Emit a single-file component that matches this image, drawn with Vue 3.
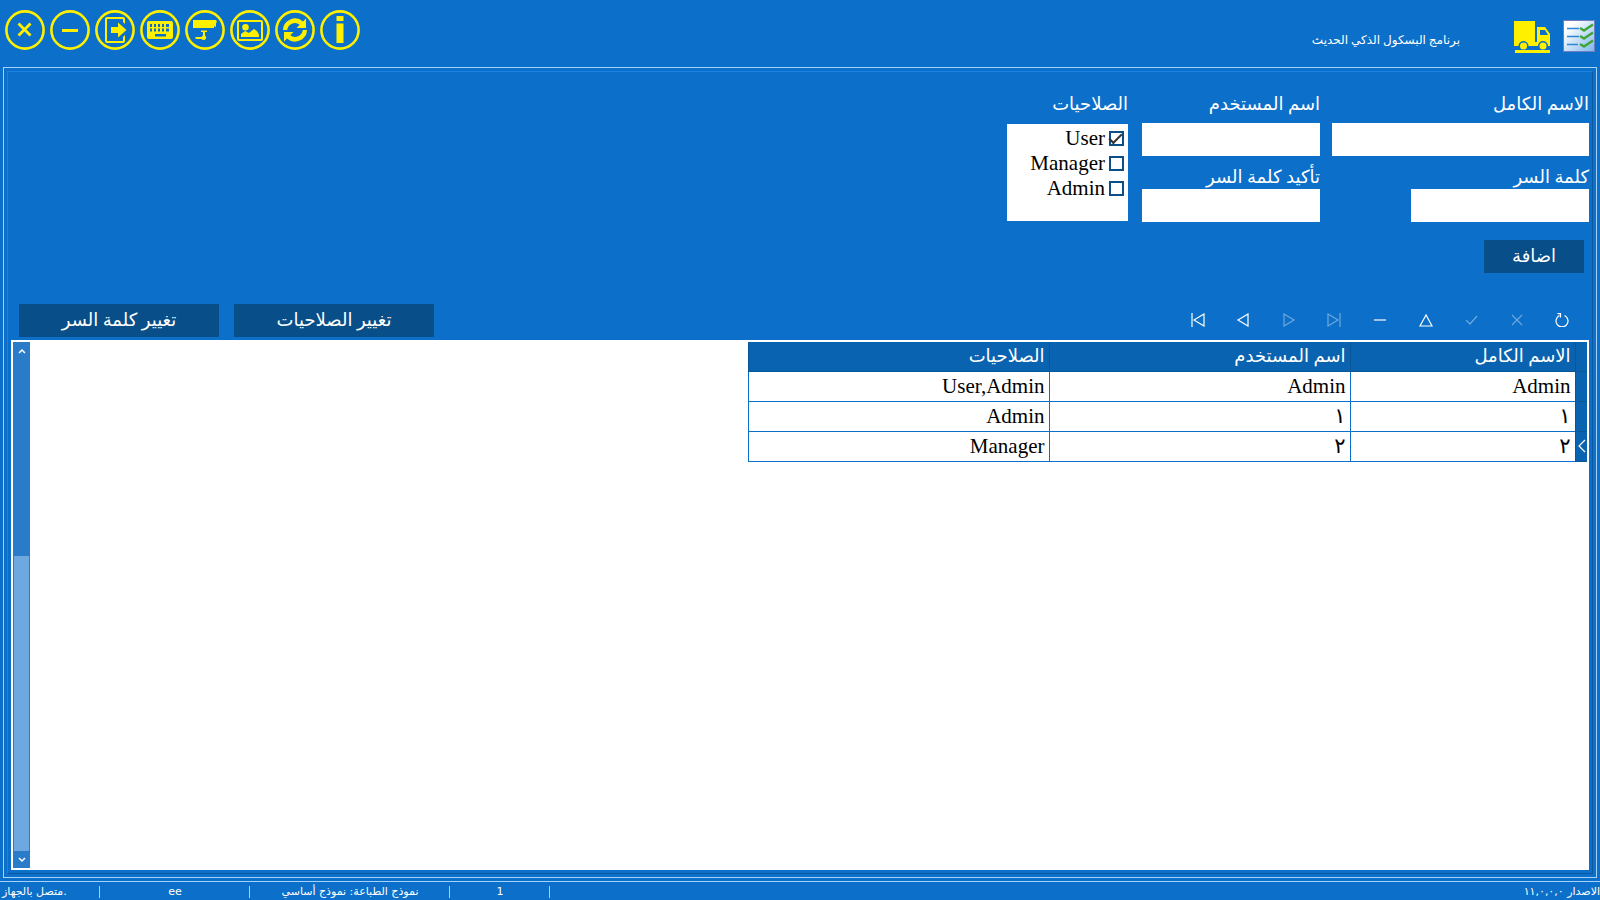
<template>
  <div class="app" dir="rtl">
    <header class="header">
      <svg class="header__list" viewBox="0 0 32 32" aria-hidden="true">
        <defs>
          <linearGradient id="sheet" x1="0" y1="0" x2="1" y2="1">
            <stop offset="0.2" stop-color="#ffffff" />
            <stop offset="1" stop-color="#7db4ee" />
          </linearGradient>
        </defs>
        <rect x="0.5" y="0.5" width="31" height="31" fill="url(#sheet)" stroke="#6f7fbd" />
        <path d="M4 8.5h12M4 16.500h12M4 24.500h11" stroke="#2f86d6" stroke-width="1.300" />
        <path d="M17 8l4 2.500l9-6M17 16l4 2.500l9-6M17 24l4 2.500l9-6" fill="none" stroke="#3fa535" stroke-width="2.400" />
      </svg>
      <svg class="header__truck" viewBox="0 0 36 32" fill="#fff000" fill-rule="evenodd" aria-hidden="true">
        <path d="M0 0h21v21h2V6h8l5 7v12h-2a5 5 0 0 0-10 0h-9.500a5 5 0 0 0-10 0H0zM26 9v5h8l-3-5z" />
        <circle cx="9.500" cy="25" r="3.500" />
        <circle cx="29" cy="25" r="3.500" />
        <path d="M1 29h35v3H1z" />
      </svg>
      <h1 class="header__title">برنامج البسكول الذكي الحديث</h1>
      <nav class="header__actions" dir="ltr">
        <button v-for="action in actions" :key="action.name" class="round" type="button" :aria-label="action.name">
          <svg viewBox="0 0 40 40" fill="#fff000" fill-rule="evenodd">
            <circle cx="20" cy="20" r="18.600" fill="none" stroke="#fff000" stroke-width="2.600" />
            <path :d="action.path" />
          </svg>
        </button>
      </nav>
    </header>

    <main class="panel">
      <div class="panel__inner">
        <form class="form" @submit.prevent>
          <div class="form__columns">
            <div class="column column--wide">
              <div class="field">
                <label for="full-name">الاسم الكامل</label>
                <input id="full-name" v-model="form.fullName" type="text" />
              </div>
              <div class="field field--short">
                <label for="password">كلمة السر</label>
                <input id="password" v-model="form.password" type="password" autocomplete="off" />
              </div>
            </div>
            <div class="column">
              <div class="field">
                <label for="user-name">اسم المستخدم</label>
                <input id="user-name" v-model="form.userName" type="text" />
              </div>
              <div class="field">
                <label for="confirm">تأكيد كلمة السر</label>
                <input id="confirm" v-model="form.confirm" type="password" autocomplete="off" />
              </div>
            </div>
            <fieldset class="roles">
              <legend>الصلاحيات</legend>
              <div class="roles__list">
                <label v-for="role in roles" :key="role" class="roles__item">
                  <input v-model="form.roles" type="checkbox" :value="role" />{{ role }}
                </label>
              </div>
            </fieldset>
          </div>
          <button class="button button--small" type="submit">اضافة</button>
        </form>

        <div class="toolbar">
          <div class="navigator" dir="ltr">
            <button
              v-for="item in navigator"
              :key="item.name"
              class="navigator__button"
              type="button"
              :aria-label="item.name"
              :disabled="item.disabled"
            >
              <svg viewBox="0 0 14 14" fill="none" stroke="#ffffff" stroke-width="1.200"><path :d="item.path" /></svg>
            </button>
          </div>
          <div class="toolbar__buttons">
            <button class="button" type="button">تغيير الصلاحيات</button>
            <button class="button" type="button">تغيير كلمة السر</button>
          </div>
        </div>

        <section class="grid">
          <div class="grid__body">
            <table class="table">
              <thead>
                <tr>
                  <th class="table__marker"></th>
                  <th class="table__name">الاسم الكامل</th>
                  <th class="table__wide">اسم المستخدم</th>
                  <th class="table__wide">الصلاحيات</th>
                </tr>
              </thead>
              <tbody>
                <tr v-for="(user, index) in users" :key="index" @click="selected = index">
                  <td class="table__marker">
                    <svg v-if="index === selected" viewBox="0 0 11 14" fill="none" stroke="#ffffff" stroke-width="1.200">
                      <path d="M9 1L3 7l6 6" />
                    </svg>
                  </td>
                  <td>{{ user.fullName }}</td>
                  <td>{{ user.userName }}</td>
                  <td>{{ user.roles }}</td>
                </tr>
              </tbody>
            </table>
          </div>
          <div class="scroll">
            <button class="scroll__arrow" type="button" aria-label="Up">
              <svg viewBox="0 0 8 6"><path d="M1 5l3-3l3 3" /></svg>
            </button>
            <div class="scroll__track"><div class="scroll__thumb"></div></div>
            <button class="scroll__arrow" type="button" aria-label="Down">
              <svg viewBox="0 0 8 6"><path d="M1 1l3 3l3-3" /></svg>
            </button>
          </div>
        </section>
      </div>
    </main>

    <footer class="status" dir="ltr">
      <span class="status__cell status__cell--start">متصل بالجهاز.</span>
      <span class="status__cell status__cell--medium">ee</span>
      <span class="status__cell status__cell--large" dir="rtl">نموذج الطباعة: نموذج أساسي</span>
      <span class="status__cell">1</span>
      <span class="status__version" dir="rtl">الاصدار ١١,٠,٠,٠</span>
    </footer>
  </div>
</template>

<script setup>
import { reactive, ref } from 'vue'

const actions = [
  { name: 'Close', path: 'M14.500 12.500l5 5l5-5l2 2l-5 5l5 5l-2 2l-5-5l-5 5l-2-2l5-5l-5-5z' },
  { name: 'Minimize', path: 'M12 19h16v3H12z' },
  { name: 'Logout', path: 'M12 7h16q2 0 2 2v5l-2-2V9H12v22h16v-4l2-2v6q0 2-2 2H12q-2 0-2-2V9q0-2 2-2zM16 17h7v-4.500l8.500 7.500L23 27.500V23h-7z' },
  {
    name: 'Keyboard',
    path: 'M9 11h22q2 0 2 2v14q0 2-2 2H9q-2 0-2-2V13q0-2 2-2zM10 14v3h2v-3zM14 14v3h2v-3zM18 14v3h2v-3zM22 14v3h2v-3zM26 14v3h3v-3zM10 18.500v3h2v-3zM14 18.500v3h2v-3zM18 18.500v3h2v-3zM22 18.500v3h2v-3zM26 18.500v3h3v-3zM15 24v2.500h11V24z'
  },
  { name: 'Camera', path: 'M8 10h23l1 2l-1 1v4l-2-1v2H8zM16 20.500h6v1.500h-2v3.500q1.200 1 1.200 2a2.600 2.600 0 0 1-4.700 1.500h-6v-2h6q.5-1 1.500-1.500V22h-2z' },
  {
    name: 'Image',
    path: 'M9 10h22q2 0 2 2v17q0 2-2 2H9q-2 0-2-2V12q0-2 2-2zM9 12v17h22V12zM15.500 14a3.300 3.300 0 1 1 0 6.600a3.300 3.300 0 1 1 0-6.600zM11 27v-3l4-3l4 2l5-4q4 2 5 6v2z'
  },
  {
    name: 'Refresh',
    path: 'M8 20A12 12 0 0 1 28 11.500L31 8.500V18H21.500l3.200-3.200A7.800 7.800 0 0 0 12.200 20zM32 20A12 12 0 0 1 12 28.500L9 31.500V22h9.500l-3.200 3.200A7.800 7.800 0 0 0 27.800 20z'
  },
  { name: 'Info', path: 'M16.500 6h7v5h-7zM16.500 13.500h7V33h-7z' }
]

const navigator = [
  { name: 'First', path: 'M1 0v14M13 1v12L3 7z' },
  { name: 'Previous', path: 'M12 1v12L2 7z' },
  { name: 'Next', path: 'M2 1v12l10-6z', disabled: true },
  { name: 'Last', path: 'M1 1v12l10-6zM13 0v14', disabled: true },
  { name: 'Delete', path: 'M1 7h12' },
  { name: 'Edit', path: 'M7 2L1 13h12z' },
  { name: 'Post', path: 'M2 7l4 4l7-8', disabled: true },
  { name: 'Cancel', path: 'M2 2l10 10M12 2L2 12', disabled: true },
  { name: 'Refresh', path: 'M4.500 2.500a6 6 0 1 0 5 0M2.500 0.600h3v4' }
]

const roles = ['User', 'Manager', 'Admin']

const users = [
  { fullName: 'Admin', userName: 'Admin', roles: 'User,Admin' },
  { fullName: '١', userName: '١', roles: 'Admin' },
  { fullName: '٢', userName: '٢', roles: 'Manager' }
]

const selected = ref(2)

const form = reactive({
  fullName: '',
  userName: '',
  password: '',
  confirm: '',
  roles: ['User']
})
</script>

<style>
body {
  background-color: #0c6fc9;
}
</style>

<style scoped>
.app {
  display: flex;
  flex-direction: column;
  min-height: 100vh;
  background-color: #0c6fc9;
  color: #ffffff;
  font-family: "Liberation Serif", "DejaVu Sans", serif;
  font-size: 18px;
}

.app * {
  box-sizing: border-box;
}

button {
  padding: 0;
  border: none;
  background: none;
  color: inherit;
  font: inherit;
  cursor: pointer;
}

svg {
  display: block;
}

/* Header */
.header {
  display: flex;
  align-items: flex-start;
  height: 67px;
  padding: 10px 5px 0;
}

.header__list {
  width: 32px;
  height: 32px;
  margin-top: 10px;
}

.header__truck {
  width: 36px;
  height: 32px;
  margin: 11px 13px 0 54px;
}

.header__title {
  margin: 20px 0 0;
  font-size: 12px;
  font-weight: 400;
  line-height: 20px;
}

.header__actions {
  display: flex;
  gap: 5px;
  margin-right: auto;
}

.round {
  width: 40px;
  height: 40px;
}

/* Panel */
.panel {
  display: flex;
  flex: 1;
  margin: 0 3px 3px;
  padding: 3px;
  border: 1px solid #a3d2fb;
}

.panel__inner {
  display: flex;
  flex: 1;
  flex-direction: column;
  padding: 20px 3px 3px;
  border: 1px solid #1a80e2;
  border-right-color: #0a58a0;
  border-bottom-color: #0a58a0;
}

/* Form */
.form__columns {
  display: flex;
  gap: 12px;
}

.column {
  display: flex;
  flex-direction: column;
  gap: 9px;
  width: 178px;
}

.column--wide {
  width: 257px;
}

.field {
  display: flex;
  flex-direction: column;
}

.field:first-child {
  gap: 7px;
}

.field--short {
  width: 178px;
}

.field label,
.roles legend {
  line-height: 24px;
  white-space: nowrap;
}

.field label {
  height: 24px;
}

.field input {
  width: 100%;
  height: 33px;
  padding: 0 6px;
  border: none;
  outline: none;
  background-color: #ffffff;
  font: inherit;
}

.roles {
  width: 121px;
  min-width: 0;
  margin: 0 2px 0 0;
  padding: 0;
  border: none;
}

.roles legend {
  padding: 0;
}

.roles__list {
  height: 97px;
  margin-top: 8px;
  padding: 2px 4px;
  background-color: #ffffff;
  color: #000000;
}

.roles__item {
  display: flex;
  align-items: center;
  gap: 4px;
  height: 25px;
  font-size: 21px;
}

.roles__item input {
  display: grid;
  place-items: center;
  width: 15px;
  height: 15px;
  margin: 0;
  border: 2px solid #0a4f8a;
  appearance: none;
}

.roles__item input:checked::after {
  content: "";
  width: 11px;
  height: 5px;
  border: solid #333333;
  border-width: 0 0 2px 2px;
  transform: rotate(-45deg) translate(1px, -1px);
}

.button {
  width: 200px;
  height: 33px;
  padding-bottom: 2px;
  background-color: #084e89;
}

.button--small {
  display: block;
  width: 100px;
  margin: 18px 5px 0 0;
}

/* Toolbar */
.toolbar {
  display: flex;
  align-items: flex-start;
  justify-content: space-between;
  margin: 31px 4px 3px 8px;
}

.navigator {
  display: flex;
  width: 410px;
}

.navigator__button {
  display: flex;
  flex: 1;
  align-items: center;
  justify-content: center;
  height: 31px;
}

.navigator__button svg {
  width: 14px;
  height: 14px;
}

.navigator__button:disabled {
  opacity: 0.4;
  cursor: default;
}

.toolbar__buttons {
  display: flex;
  gap: 15px;
}

/* Grid */
.grid {
  display: flex;
  flex: 1;
  border: 2px solid #ffffff;
  background-color: #ffffff;
}

.grid__body {
  flex: 1;
}

.table {
  table-layout: fixed;
  width: 839px;
  border-collapse: collapse;
  color: #000000;
}

.table th,
.table td {
  height: 30px;
  padding: 0 4px;
  border-bottom: 1px solid #0c6fc9;
  border-left: 1px solid #0c6fc9;
  line-height: 26px;
  text-align: right;
}

.table th {
  height: 29px;
  border-color: #0a5596;
  background-color: #0a63b0;
  color: #ffffff;
  font-weight: 400;
}

.table td {
  font-size: 21px;
}

.table .table__marker {
  width: 12px;
  padding: 0;
  border-color: #0a5596;
  background-color: #0a63b0;
}

.table__marker svg {
  width: 11px;
  height: 14px;
}

.table__name {
  width: 225px;
}

.table__wide {
  width: 301px;
}

.scroll {
  display: flex;
  flex-direction: column;
  width: 17px;
  background-color: #2a7cc8;
}

.scroll__arrow {
  display: flex;
  align-items: center;
  justify-content: center;
  height: 17px;
}

.scroll__arrow svg {
  width: 8px;
  height: 6px;
  fill: none;
  stroke: #ffffff;
  stroke-width: 1.5px;
}

.scroll__track {
  display: flex;
  flex: 1;
  flex-direction: column;
  justify-content: flex-end;
  padding: 0 1px;
}

.scroll__thumb {
  height: 60%;
  background-color: #6ea8e0;
}

/* Status bar */
.status {
  display: flex;
  height: 19px;
  border-top: 1px solid #a3d2fb;
  font-family: "DejaVu Sans", sans-serif;
  font-size: 11px;
  line-height: 20px;
  white-space: nowrap;
}

.status__cell {
  position: relative;
  width: 100px;
  text-align: center;
}

.status__cell::after {
  content: "";
  position: absolute;
  top: 4px;
  right: 0;
  width: 1px;
  height: 12px;
  background-color: #a3d2fb;
}

.status__cell--start {
  padding-left: 2px;
  text-align: left;
}

.status__cell--medium {
  width: 150px;
}

.status__cell--large {
  width: 200px;
}

.status__version {
  margin-left: auto;
}
</style>
